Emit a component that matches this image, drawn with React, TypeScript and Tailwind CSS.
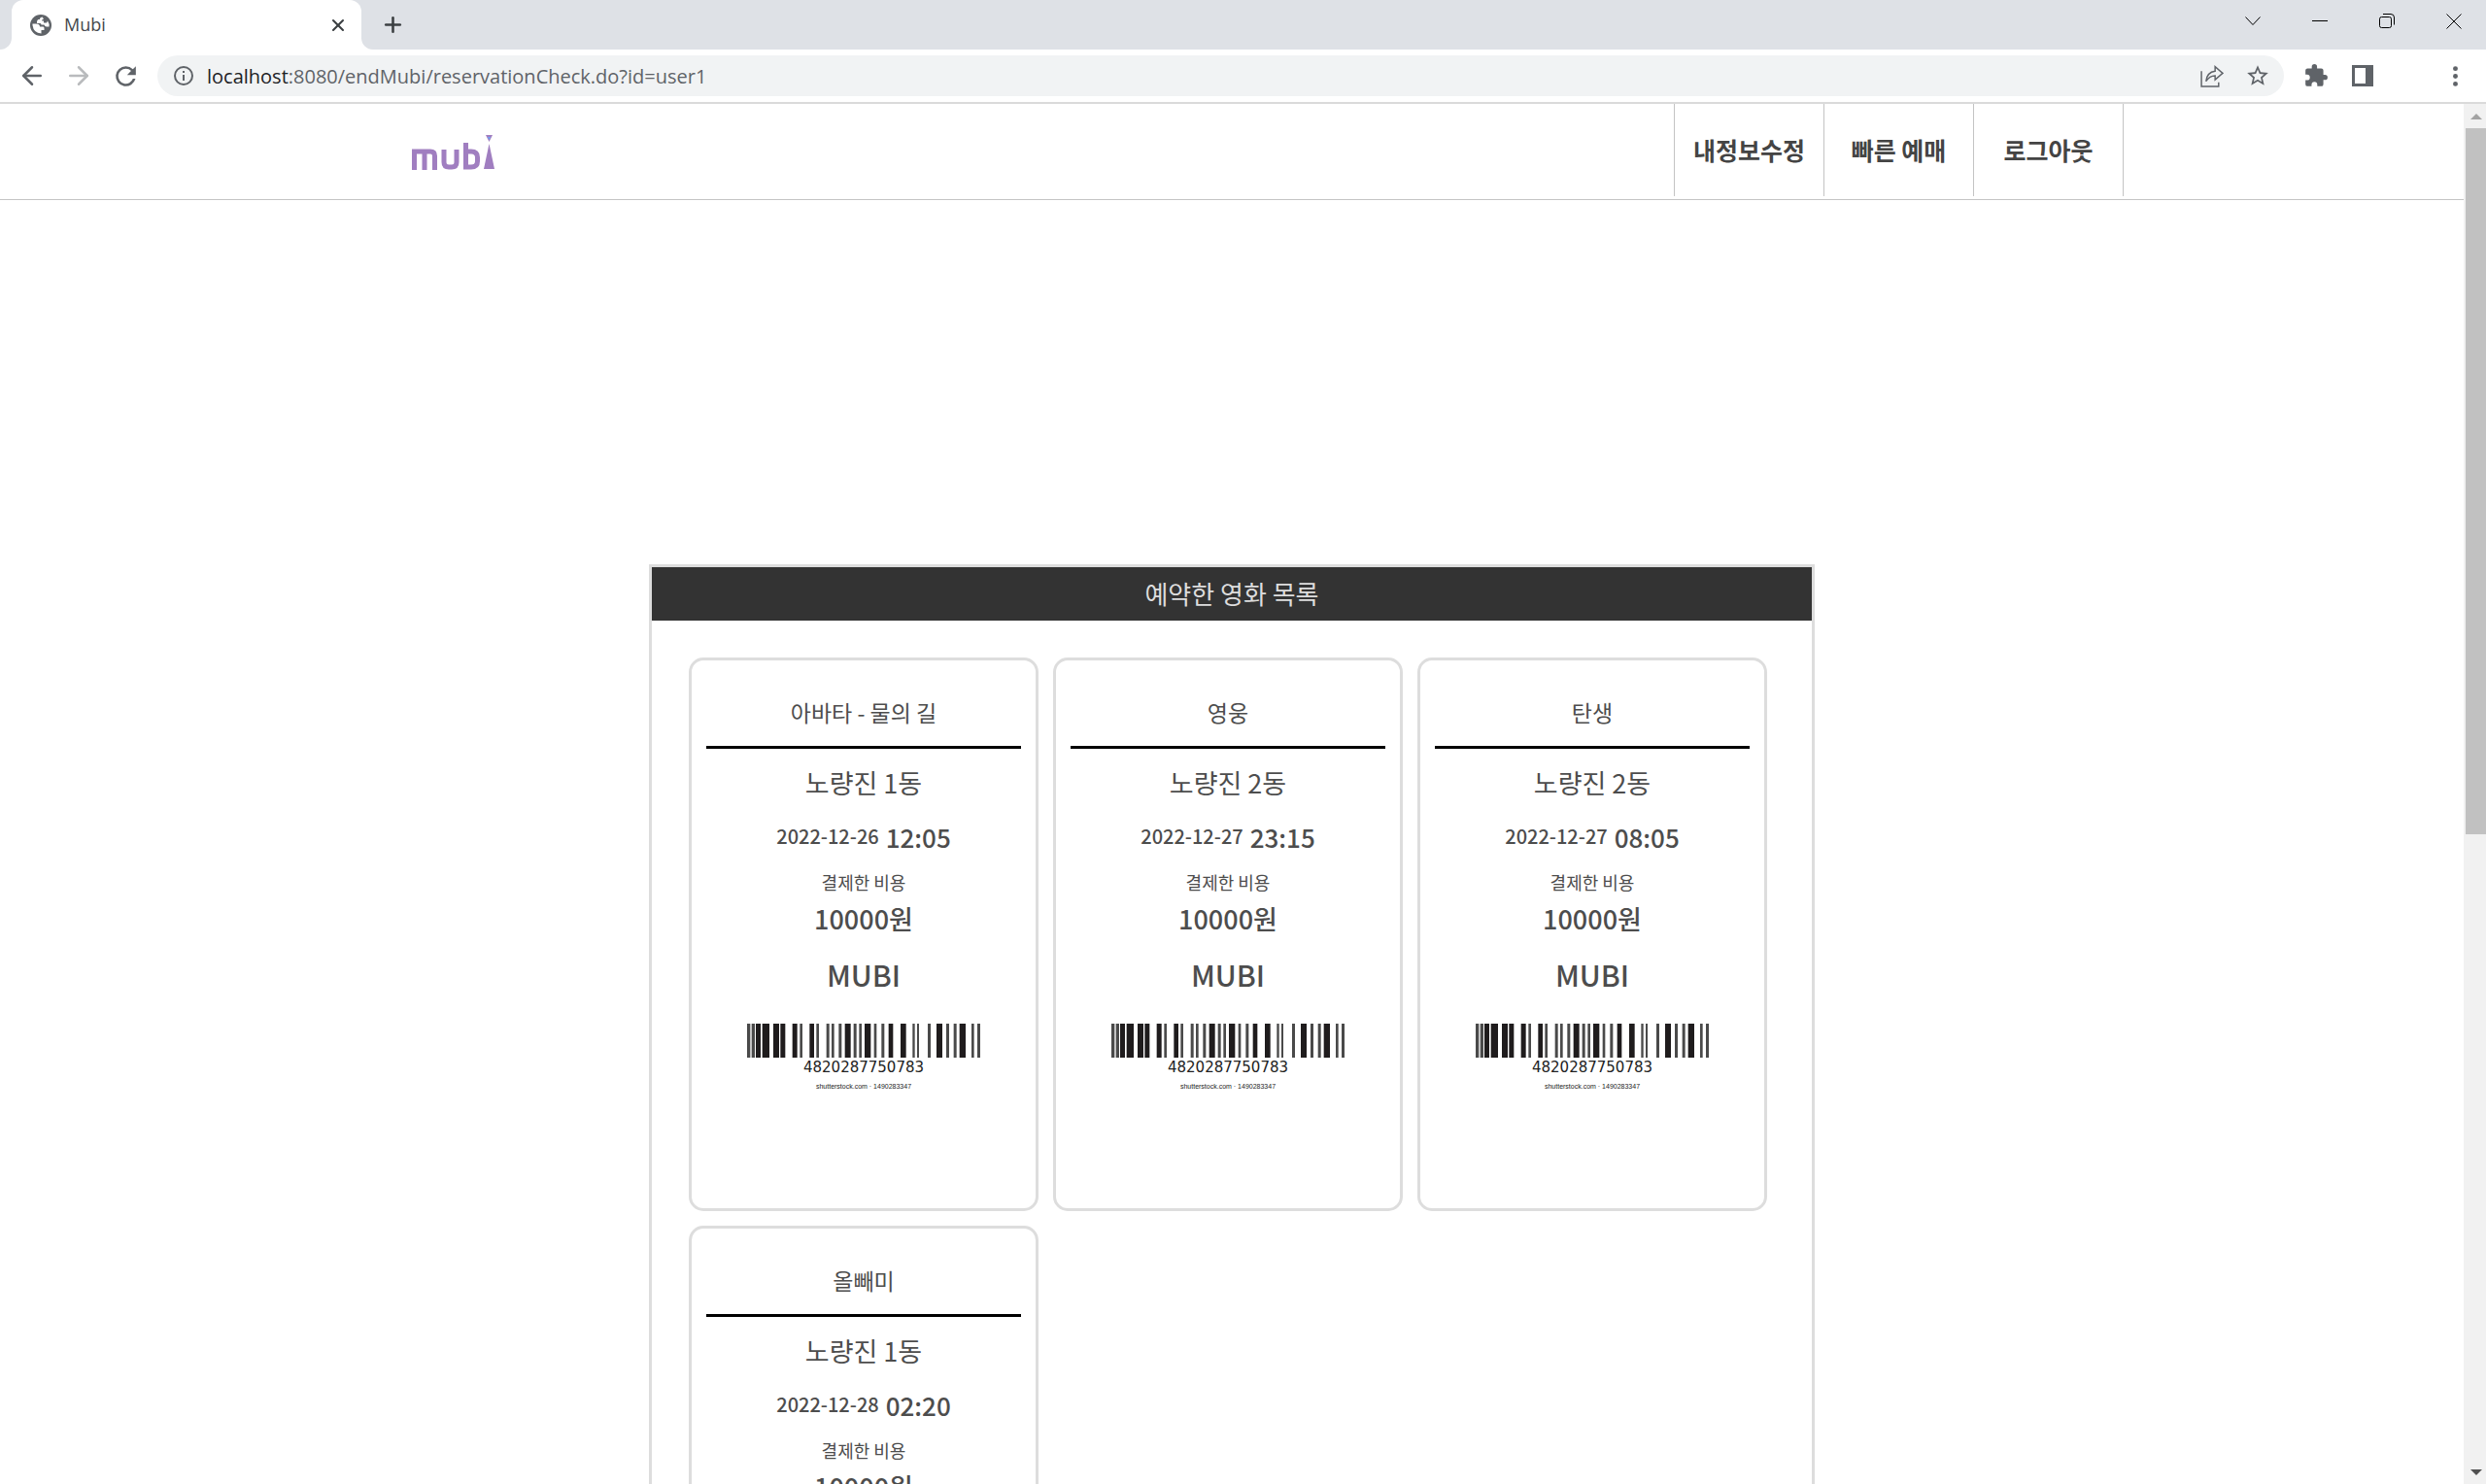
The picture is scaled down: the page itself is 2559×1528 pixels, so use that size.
import React from 'react';
import { ArrowLeft, ArrowRight, Plus, X } from 'lucide-react';

type Ticket = { title: string; place: string; date: string; time: string };

const tickets: Ticket[] = [
  { title: '아바타 - 물의 길', place: '노량진 1동', date: '2022-12-26', time: '12:05' },
  { title: '영웅', place: '노량진 2동', date: '2022-12-27', time: '23:15' },
  { title: '탄생', place: '노량진 2동', date: '2022-12-27', time: '08:05' },
  { title: '올빼미', place: '노량진 1동', date: '2022-12-28', time: '02:20' },
];

const bars: [number, number][] = [
  [0, 10], [14, 10], [27, 15], [47, 22], [81, 18], [103, 15], [140, 15], [163, 8],
  [193, 14], [214, 8], [245, 9], [261, 8], [283, 9], [302, 18], [329, 9], [346, 8],
  [363, 19], [392, 8], [415, 9], [437, 14], [474, 17], [511, 7], [525, 6], [558, 9],
  [585, 18], [615, 9], [638, 9], [656, 19], [693, 8], [711, 9],
];

function Barcode() {
  return (
    <div className="flex w-60 flex-col items-center pt-7 font-['DejaVu_Sans'] text-[#222]">
      <svg viewBox="0 0 720 105" className="h-[35px] w-60" aria-hidden="true">
        {bars.map(([x, w]) => (
          <rect key={x} x={x} y="0" width={w} height="105" fill={w < 11 ? '#4a4a4a' : '#1f1c1d'} />
        ))}
      </svg>
      <span className="mt-[2px] text-[15px] leading-[16px]">4820287750783</span>
      <span className="mt-2 font-['Liberation_Sans'] text-[7px] leading-[8px]">shutterstock.com · 1490283347</span>
    </div>
  );
}

function TicketCard({ t }: { t: Ticket }) {
  return (
    <article className="flex h-[570px] w-[360px] flex-col items-center rounded-[15px] border-3 border-[#ddd] px-[15px] text-[#4d4d4d]">
      <h2 className="w-full border-b-3 border-black pt-[35px] pb-[17px] text-center text-[23px] leading-[36px]">{t.title}</h2>
      <p className="mt-[15px] text-[27px] leading-[40px]">{t.place}</p>
      <p className="mt-[15px] flex h-[40px] items-center gap-[7px] font-medium">
        <span className="text-[20px]">{t.date}</span>
        <span className="text-[26px]">{t.time}</span>
      </p>
      <p className="mt-[14px] text-[18px] leading-[26px]">결제한 비용</p>
      <p className="mt-[5px] text-[27px] leading-[40px] font-medium">10000원</p>
      <p className="mt-[14px] text-[30px] leading-[46px] font-medium">MUBI</p>
      <Barcode />
    </article>
  );
}

function Logo() {
  return (
    <svg viewBox="0 0 90 38" className="h-[38px] w-[90px]" role="img" aria-label="mubi">
      <g fill="none" stroke="#a07ec0" strokeWidth="5">
        <path d="M4.500 36V17H21Q25.500 17 25.500 21.500V36M15 17V36" />
        <path d="M35 15V28Q35 33 40 33H43Q48 33 48 28V15" />
        <path d="M57.500 8V33H63Q69.500 33 69.500 27V23Q69.500 17 63 17H57.500" />
      </g>
      <path d="M81.500 9L87 35H76Z" fill="#a07ec0" />
      <path d="M78 0H85L81.500 7Z" fill="#a07ec0" />
      <path d="M80 2H83L81.500 5Z" fill="#6fa2f5" />
    </svg>
  );
}

function Globe() {
  return (
    <svg viewBox="0 0 22 22" className="size-[22px]" aria-hidden="true">
      <circle cx="11" cy="11" r="11" fill="#5f6368" />
      <path
        fill="#fff"
        d="M2.500 9.500H6Q10 9.500 10 12.500H13.500Q14.500 12.500 14.500 14V16H11.500V19.500Q3.500 19 2.500 11ZM12.500 2.600Q9.500 3.500 10 5H8.500Q7 5.500 7 7.500V9H10.500Q11.500 9 11.500 10.500H14.500Q15 12.500 17 12.500H19.500Q20 9.500 18 6.500L17 8.500H14V6.500H12Q12 5 14 4.500Z"
      />
    </svg>
  );
}

function BrowserChrome() {
  return (
    <header className="shrink-0 font-['Open_Sans',sans-serif] text-[#5f6368]">
      <div className="flex h-[51px] items-start bg-[#dee1e6]">
        <div className="h-[51px] w-3 bg-white">
          <div className="h-full rounded-br-[12px] bg-[#dee1e6]" />
        </div>
        <div className="flex h-[51px] w-[360px] items-center rounded-t-[12px] bg-white pr-[14px] pl-[19px]">
          <Globe />
          <span className="ml-[13px] flex-1 text-[18px] text-[#45484c]">Mubi</span>
          <button aria-label="탭 닫기"><X className="size-[20px] text-[#3c4043]" strokeWidth={2.5} /></button>
        </div>
        <div className="h-[51px] w-3 bg-white">
          <div className="h-full rounded-bl-[12px] bg-[#dee1e6]" />
        </div>
        <button aria-label="새 탭" className="mt-[13px] ml-2"><Plus className="size-[25px] text-[#3c4043]" strokeWidth={2.5} /></button>
        <div className="ml-auto flex items-center gap-[45px] pt-[10px] pr-[21px] text-black">
          <button aria-label="탭 검색">
            <svg viewBox="0 0 24 24" className="size-6"><path d="M4.500 7.500L12 15.500L19.500 7.500" stroke="currentColor" fill="none" /></svg>
          </button>
          <button aria-label="최소화">
            <svg viewBox="0 0 24 24" className="size-6"><path d="M4 11.500H20" stroke="currentColor" fill="none" /></svg>
          </button>
          <button aria-label="이전 크기로 복원">
            <svg viewBox="0 0 24 24" className="size-6" fill="none" stroke="currentColor">
              <rect x="4.500" y="7.500" width="12" height="11" rx="2" />
              <path d="M8 4.500H16Q19.500 4.500 19.500 8V15.500" />
            </svg>
          </button>
          <button aria-label="창 닫기">
            <svg viewBox="0 0 24 24" className="size-6"><path d="M4.500 4.500L19.500 19.500M19.500 4.500L4.500 19.500" stroke="currentColor" fill="none" /></svg>
          </button>
        </div>
      </div>
      <div className="flex h-[56px] items-center border-b-2 border-[#dadada] bg-white pr-[18px] pl-[18px]">
        <button aria-label="뒤로"><ArrowLeft className="size-[30px]" strokeWidth={2} /></button>
        <button aria-label="앞으로" className="ml-[18px]"><ArrowRight className="size-[30px] text-[#b9bbbd]" strokeWidth={2} /></button>
        <button aria-label="새로고침" className="ml-[18px]">
          <svg viewBox="0 0 24 24" className="size-[31px]" fill="currentColor">
            <path d="M17.650 6.350A7.960 7.960 0 0 0 12 4a8 8 0 1 0 7.730 10h-2.080A6 6 0 1 1 12 6c1.660 0 3.140.69 4.220 1.780L13 11h7V4z" />
          </svg>
        </button>
        <div className="ml-[17px] flex h-[42px] flex-1 items-center rounded-full bg-[#f1f3f4] pr-[14px] pl-[15px]">
          <svg viewBox="0 0 24 24" className="size-6" fill="none" stroke="currentColor" strokeWidth="2">
            <circle cx="12" cy="12" r="9" /><path d="M12 11V17M12 7V9" />
          </svg>
          <a href="#top" className="ml-3 flex-1 pt-[2px] text-[20px]"><span className="text-[#202124]">localhost</span>:8080/endMubi/reservationCheck.do?id=user1</a>
          <button aria-label="공유">
            <svg viewBox="0 0 24 24" className="size-[25px]" fill="none" stroke="currentColor" strokeWidth="1.400">
              <path d="M2 7V22H19V18" /><path d="M6.500 17Q7.500 8 15.500 7V2.500L23 9L15.500 15.500V11.500Q10 11.500 6.500 17Z" />
            </svg>
          </button>
          <button aria-label="북마크" className="ml-[22px]">
            <svg viewBox="0 0 24 24" className="size-[26px]" fill="currentColor">
              <path d="M22 9.240l-7.190-.62L12 2 9.190 8.630 2 9.240l5.460 4.730L5.820 21 12 17.270 18.180 21l-1.630-7.030L22 9.240zM12 15.400l-3.760 2.270 1-4.280-3.320-2.880 4.380-.38L12 6.100l1.710 4.040 4.380.38-3.320 2.880 1 4.280L12 15.400z" />
            </svg>
          </button>
        </div>
        <button aria-label="확장 프로그램" className="ml-5">
          <svg viewBox="0 0 24 24" className="size-[26px]" fill="currentColor">
            <path d="M20.500 11H19V7a2 2 0 0 0-2-2h-4V3.500a2.500 2.500 0 0 0-5 0V5H4a2 2 0 0 0-2 2v3.800h1.500a2.700 2.700 0 0 1 0 5.400H2V20a2 2 0 0 0 2 2h3.800v-1.500a2.700 2.700 0 0 1 5.400 0V22H17a2 2 0 0 0 2-2v-4h1.500a2.500 2.500 0 0 0 0-5z" />
          </svg>
        </button>
        <button aria-label="측면 패널" className="ml-6">
          <svg viewBox="0 0 22 22" className="size-[22px]"><path fillRule="evenodd" fill="currentColor" d="M0 0H22V22H0ZM3 3V19H14V3Z" /></svg>
        </button>
        <button aria-label="메뉴" className="ml-[71px]">
          <svg viewBox="0 0 24 24" className="size-[27px]" fill="currentColor"><circle cx="12" cy="5" r="2.200" /><circle cx="12" cy="12" r="2.200" /><circle cx="12" cy="19" r="2.200" /></svg>
        </button>
      </div>
    </header>
  );
}

function Scrollbar() {
  return (
    <div className="flex w-[23px] shrink-0 flex-col items-end bg-[#f1f1f1]">
      <div className="flex h-[25px] w-[21px] items-center justify-center">
        <svg viewBox="0 0 12 6" className="h-[6px] w-3"><path d="M6 0L12 6H0Z" fill="#a3a3a3" /></svg>
      </div>
      <div className="flex w-[21px] flex-1 flex-col">
        <div className="h-[53%] bg-[#c1c1c1]" />
      </div>
      <div className="flex h-[25px] w-[21px] items-center justify-center">
        <svg viewBox="0 0 12 6" className="h-[6px] w-3"><path d="M6 6L0 0H12Z" fill="#505050" /></svg>
      </div>
    </div>
  );
}

export default function App() {
  return (
    <div className="flex h-screen flex-col overflow-hidden bg-white font-['Noto_Sans_CJK_KR',sans-serif]">
      <BrowserChrome />
      <div className="flex min-h-0 flex-1">
        <div id="top" className="min-w-0 flex-1 overflow-hidden">
          <div className="h-[99px] border-b border-[#c4c4c4]">
            <div className="mx-auto flex max-w-[1836px] items-start justify-between pl-[72px]">
              <a href="#top" className="mt-8"><Logo /></a>
              <nav className="flex h-[95px] border-r border-[#c4c4c4] text-[25px] font-bold text-[#444]">
                {['내정보수정', '빠른 예매', '로그아웃'].map((label) => (
                  <a key={label} href="#top" className="flex w-[154px] items-center justify-center border-l border-[#c4c4c4] whitespace-nowrap">{label}</a>
                ))}
              </nav>
            </div>
          </div>
          <main className="mx-auto mt-[375px] w-[1200px] border-3 border-[#ddd]">
            <h1 className="bg-[#333] pb-px text-center text-[26px] leading-[54px] text-[#ddd]">예약한 영화 목록</h1>
            <div className="flex flex-wrap gap-[15px] p-[38px]">
              {tickets.map((t) => <TicketCard key={t.title} t={t} />)}
            </div>
          </main>
        </div>
        <Scrollbar />
      </div>
    </div>
  );
}
